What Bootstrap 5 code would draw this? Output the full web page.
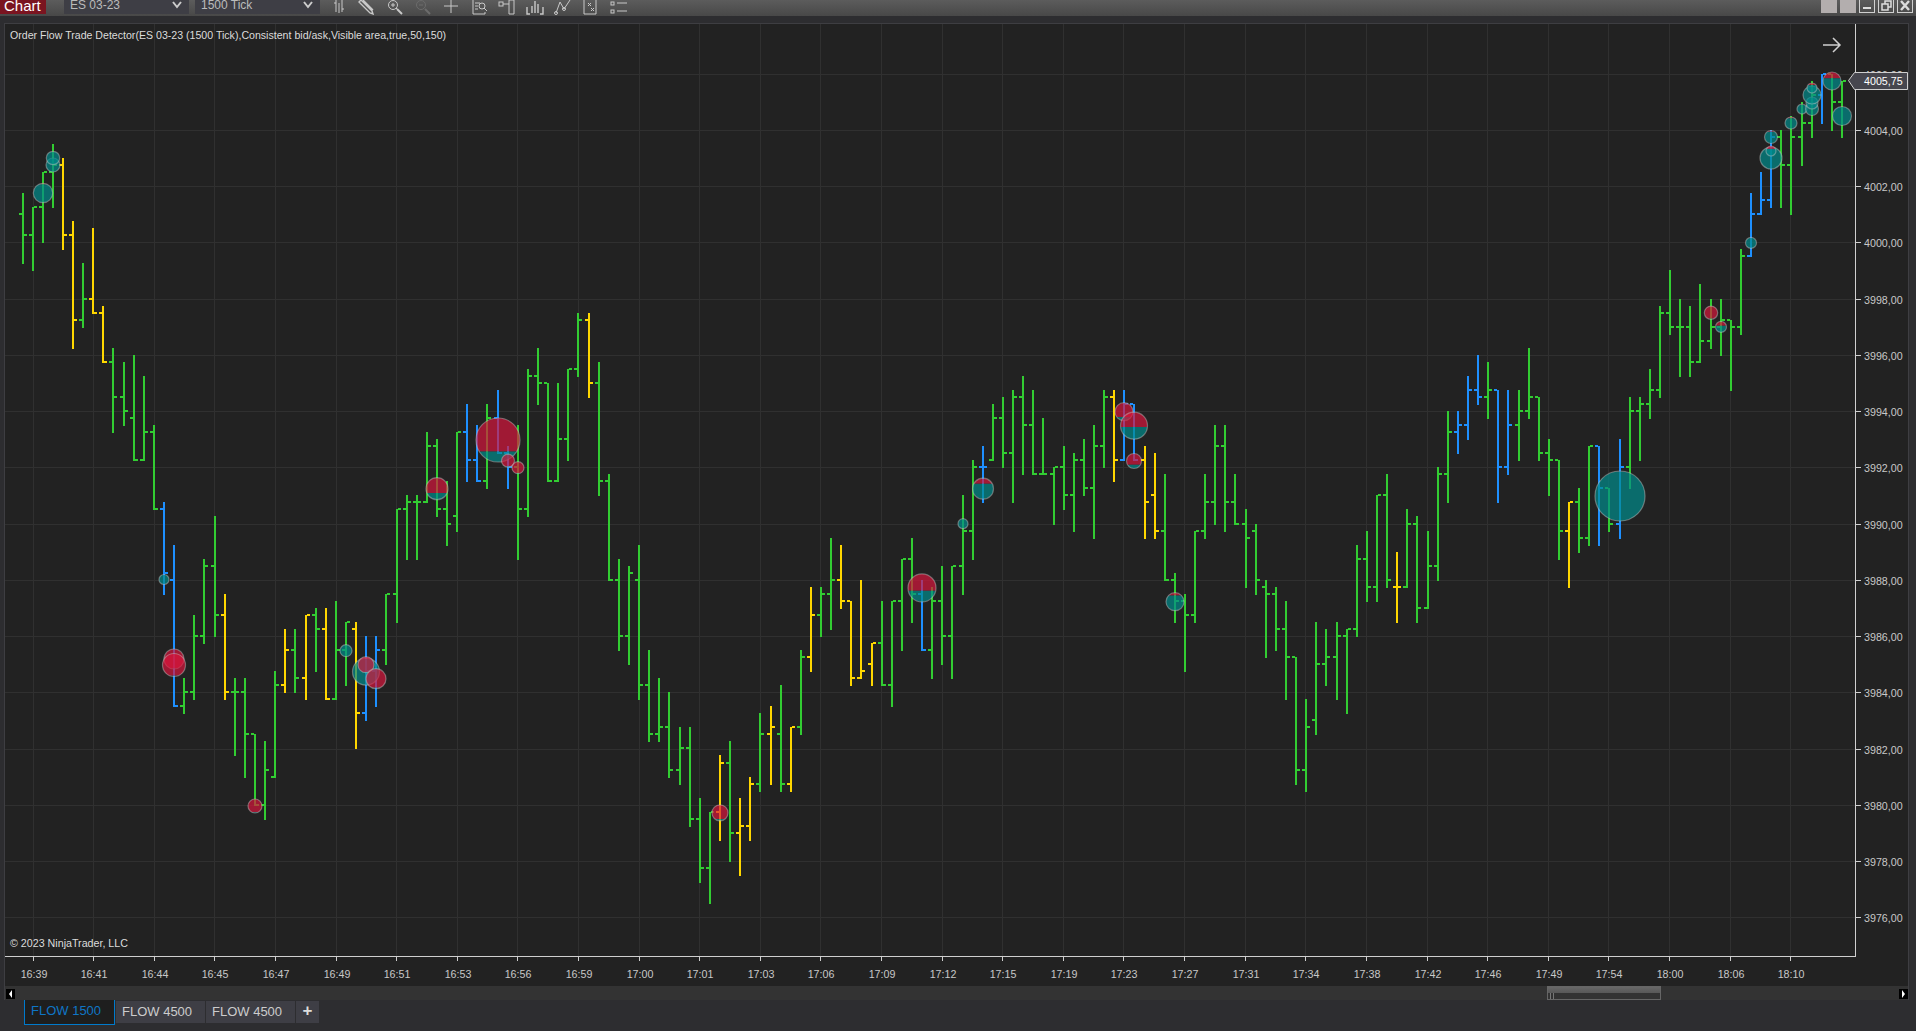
<!DOCTYPE html>
<html lang="en">
<head>
<meta charset="utf-8">
<title>Chart</title>
<link href="https://cdn.jsdelivr.net/npm/bootstrap@5.3.0/dist/css/bootstrap.min.css" rel="stylesheet">
<style>
html,body{height:100%;overflow:hidden}
body{background:#2d2d30;font-family:"Liberation Sans",Arial,sans-serif;color:#ccc}
.tool-strip{height:16px;background:linear-gradient(#5c5c5c,#484848);overflow:hidden}
.chart-tag{width:46px;height:14px;background:#7a1420;color:#fff;font-size:15px;line-height:11px;padding-left:4px;overflow:hidden}
.combo-box{height:14px;background:#3e3e45;color:#bbb;font-size:12px;line-height:10px;padding-left:6px;overflow:hidden}
.combo-a{width:125px;margin-left:18px}
.combo-b{width:125px;margin-left:6px}
.combo-box svg{margin-right:7px;flex:none}
.tool-icons{margin-left:10px;gap:10px}
.tool-icons svg{display:block;width:18px;height:15px;fill:none;stroke:#c8c8c8;stroke-width:1}
.tool-icons svg.dim{stroke:#6c6c6c}
.win-btns{margin-left:auto;gap:3px;padding-right:3px}
.win-btns span{display:block;width:16px;height:13px;border:1px solid #d0d0d0;border-top:0}
.win-btns span.pale{background:#b3aeae;border-color:#b3aeae}
.win-btns svg{display:block;width:14px;height:12px;stroke:#ddd;fill:none}
.chart-frame{margin:7px 7px 0 4px;border:1px solid #3e3e42;height:977px;background:#222}
.chart-frame>svg{display:block;width:1903px;height:962px}
.scroll-row{height:14px;background:#333}
.scroll-end{width:9px;height:10px;background:#000;margin-top:3px;margin-left:1px}
.scroll-end.far{margin-left:238px}
.scroll-thumb{width:114px;height:14px;margin-left:1532px;border:1px solid #666;background:linear-gradient(#686868 0,#585858 50%,#333 50%,#333 100%);padding:6px 0 0 2px}
.scroll-thumb svg{display:block}
.tab-strip{padding-left:24px;gap:1px;height:25px}
.flow-tab{width:89px;height:22px;margin-top:1px;background:#3e3e45;color:#ccc;font-size:13px;line-height:21px;padding-left:6px}
.flow-tab.on{width:91px;height:25px;margin-top:0;background:#1e1e1e;color:#0f76c6;border:1px solid #007acc;border-top:0;line-height:22px;padding-left:6px}
.flow-add{width:23px;height:22px;margin-top:1px;background:#3e3e45;color:#ddd;font-size:17px;font-weight:700;line-height:20px;text-align:center}
.t-ax{font-size:10.7px;fill:#c8c8c8;font-family:"Liberation Sans",Arial,sans-serif}
.t-note{font-size:10.7px;fill:#dcdcdc;font-family:"Liberation Sans",Arial,sans-serif}
.t-legend{font-size:10.6px;fill:#dcdcdc;font-family:"Liberation Sans",Arial,sans-serif}
.t-last{fill:#fff}
</style>
</head>
<body>
<div class="tool-strip d-flex">
  <div class="chart-tag">Chart</div>
  <div class="combo-box combo-a d-flex justify-content-between"><span>ES 03-23</span><svg width="10" height="10" viewBox="0 0 10 10"><path d="M1 2l4 5 4-5" fill="none" stroke="#ccc" stroke-width="2"/></svg></div>
  <div class="combo-box combo-b d-flex justify-content-between"><span>1500 Tick</span><svg width="10" height="10" viewBox="0 0 10 10"><path d="M1 2l4 5 4-5" fill="none" stroke="#ccc" stroke-width="2"/></svg></div>
  <div class="tool-icons d-flex">
    <svg viewBox="0 0 18 15"><path d="M6 0v12M6 3H4M12 0v12M12 9h2M9 3v10"/></svg>
    <svg viewBox="0 0 18 15"><path d="M3 0l11 11 1 3-3-1L1 2zM5 0l10 10" stroke-width="1.4"/></svg>
    <svg viewBox="0 0 18 15"><circle cx="7" cy="5" r="4.5"/><path d="M5 5h4M7 3v4M10 8l6 6" /><path d="M11 9l5 5" stroke-width="2"/></svg>
    <svg class="dim" viewBox="0 0 18 15"><circle cx="7" cy="5" r="4.5"/><path d="M5 5h4"/><path d="M11 9l5 5" stroke-width="2"/></svg>
    <svg viewBox="0 0 18 15"><path d="M9 0v13M2 6h14"/></svg>
    <svg viewBox="0 0 18 15"><path d="M3 0v14h12M15 14v-2M5 3h5M5 6h3M5 9h3"/><circle cx="12" cy="6" r="3"/><path d="M14 8l3 3"/></svg>
    <svg viewBox="0 0 18 15"><rect x="1" y="2" width="4" height="4"/><path d="M5 4h6M11 0h5v14h-5z"/></svg>
    <svg viewBox="0 0 18 15"><path d="M1 7v7h3M17 7v7h-3M6 6v7M9 1v12M12 4v9" stroke-width="1.4"/></svg>
    <svg viewBox="0 0 18 15"><path d="M2 13L6 2l4 7 6-9"/><circle cx="2" cy="13" r="1.5"/><circle cx="10" cy="9" r="1.5"/></svg>
    <svg viewBox="0 0 18 15"><path d="M2 0v14h12V0M6 3l3 3M9 3L6 6M9 8l3 3M12 8l-3 3"/></svg>
    <svg viewBox="0 0 18 15"><rect x="1" y="2" width="3" height="3"/><rect x="1" y="10" width="3" height="3"/><path d="M7 3h10M7 11h10"/></svg>
  </div>
  <div class="win-btns d-flex">
    <span class="pale"></span><span class="pale"></span>
    <span><svg viewBox="0 0 14 12"><path d="M3 8h8" stroke-width="2"/></svg></span>
    <span><svg viewBox="0 0 14 12"><path d="M3 4h6v6H3zM6 4V1h6v6H9" stroke-width="1.5"/></svg></span>
    <span><svg viewBox="0 0 14 12"><path d="M3 1l8 9M11 1l-8 9" stroke-width="2.4"/></svg></span>
  </div>
</div>

<div class="chart-frame">
  <svg id="plot" viewBox="5 24 1903 962" xmlns="http://www.w3.org/2000/svg"></svg>
  <div class="scroll-row d-flex">
    <div class="scroll-end d-flex align-items-center justify-content-center"><svg width="5" height="8" viewBox="0 0 5 8"><path d="M4 0v8L1 4z" fill="#fff"/></svg></div>
    <div class="scroll-thumb"><svg width="6" height="6" viewBox="0 0 6 6"><path d="M.5 0v6M3.5 0v6" stroke="#777" fill="none"/></svg></div>
    <div class="scroll-end far d-flex align-items-center justify-content-center"><svg width="5" height="8" viewBox="0 0 5 8"><path d="M1 0v8l3-4z" fill="#fff"/></svg></div>
  </div>
</div>

<div class="tab-strip d-flex">
  <div class="flow-tab on">FLOW 1500</div>
  <div class="flow-tab">FLOW 4500</div>
  <div class="flow-tab">FLOW 4500</div>
  <div class="flow-add">+</div>
</div>

<script>
const G='#32cd32',Y='#ffd700',B='#1e90ff';
const segs=[
{x0:0,y0:130,sy:2.24,b:[[69,G,139,301,190,237],[99,G,173,317,237,173],[129,G,93,254,174,93],[159,G,29,176,93,77],[189,Y,60,270,77,237],[219,Y,205,490,237,425],[249,G,298,443,425,378],[279,Y,220,410,378,410],[309,Y,392,520,410,520],[339,G,487,680,520,600],[372,G,517,664,600,631],[402,G,502,742,647,742],[432,G,549,742,742,678],[462,G,661,851,678,851],[492,B,833,1043,851,992],[522,B,927,1292,1007,1292],[552,G,1228,1308,1292,1261],[582,G,1086,1278,1261,1135],[612,G,959,1153,1135,975],[645,G,865,1137,975,1087],[675,Y,1039,1278,1087,1261],[705,G,1228,1403,1261,1261],[735,G,1228,1453,1261,1355],[765,G,1355,1515,1355,1515],[795,G,1369,1547,1514,1433],[825,G,1212,1452,1452,1245],[855,Y,1118,1262,1245,1167],[885,G,1118,1262,1167,1229],[918,Y,1087,1278,1229,1087],[948,G,1071,1215,1087,1119]]},
{x0:310,y0:300,sy:3,b:[[48,Y,925,1200,990,1200],[78,G,904,1200,1200,1053],[108,G,967,1160,1053,968],[138,Y,967,1347,990,1242],[168,B,1008,1265,1242,1105],[198,B,1008,1223,1105,1053],[228,G,884,1097,1053,884],[261,G,629,970,884,629],[291,G,586,779,629,608],[321,G,586,779,608,608],[351,G,397,608,608,440],[381,G,418,653,440,630],[411,G,545,737,630,672],[441,G,398,695,651,398],[471,B,313,548,398,482],[501,B,376,547,482,546],[531,G,313,569,546,356],[564,B,267,461,356,461],[594,B,439,569,461,503],[624,G,376,779,503,630],[654,G,205,653,630,228],[684,G,142,317,228,248],[714,G,248,546,248,546],[744,G,247,547,546,420],[774,G,206,484,420,206],[804,G,37,230,206,60],[837,Y,37,296,60,248],[867,G,184,590,248,546],[897,G,523,840,546,840],[927,G,775,1055,840,1011]]},
{x0:620,y0:330,sy:2.703,b:[[27,G,635,907,830,656],[57,G,579,1002,675,962],[87,G,865,1116,962,1095],[117,G,941,1116,1095,1076],[147,G,979,1213,1076,1189],[180,G,1073,1232,1189,1132],[210,G,1073,1345,1132,1324],[240,G,1265,1497,1324,1457],[270,G,1304,1553,1457,1304],[300,Y,1149,1383,1304,1170],[330,G,1111,1440,1170,1362],[360,Y,1265,1478,1362,1343],[390,Y,1208,1383,1343,1229],[420,G,1035,1251,1229,1094],[453,Y,1016,1232,1094,1075],[483,G,960,1251,1094,1229],[513,Y,1075,1251,1229,1075],[543,G,865,1097,1075,886],[573,Y,695,926,886,772],[603,G,695,832,772,716],[633,G,560,813,716,676],[663,Y,579,756,676,735],[693,Y,735,964,735,943],[723,Y,673,945,943,924],[756,Y,848,964,905,848],[786,G,733,964,848,962],[816,G,735,1021,962,735],[846,G,618,870,735,618],[876,G,560,794,618,716],[906,B,673,868,716,868],[936,G,695,945,868,735]]},
{x0:930,y0:360,sy:3,b:[[36,G,615,917,725,830],[66,G,617,959,830,617],[99,G,405,707,617,512],[129,G,300,599,512,323],[159,B,258,431,323,323],[189,G,132,305,302,176],[219,G,111,326,176,282],[249,G,87,431,282,113],[279,G,45,347,113,197],[309,G,87,345,197,345],[339,G,174,345,345,345],[372,G,323,494,345,323],[402,G,258,452,323,407],[432,G,279,515,407,302],[462,G,237,410,302,386],[492,G,195,536,386,260],[522,G,87,326,260,113],[552,Y,87,368,113,302],[582,B,87,302,302,134],[612,B,134,300,134,302],[645,Y,258,536,302,428],[675,Y,279,536,407,512],[705,G,342,660,512,660],[735,G,636,791,660,725],[765,G,702,938,725,767],[795,G,512,791,767,512],[825,G,342,536,512,428],[855,G,195,494,428,260],[885,G,195,515,260,428],[915,G,342,492,428,491],[948,G,447,686,491,533]]},
{x0:1240,y0:340,sy:3,b:[[48,G,549,767,572,719],[78,G,717,956,743,764],[108,G,741,935,764,869],[138,G,783,1082,869,953],[168,G,953,1337,953,1289],[198,G,1077,1358,1289,1163],[228,G,846,1187,1142,974],[258,G,867,1040,974,953],[291,G,846,1082,953,890],[321,G,869,1124,890,869],[351,G,612,893,869,656],[381,G,570,788,656,743],[411,G,467,788,743,467],[441,G,402,746,467,719],[471,Y,633,851,743,743],[501,G,507,746,743,551],[531,G,528,851,551,806],[564,G,570,806,806,677],[594,G,381,722,677,404],[624,G,213,491,404,278],[654,B,213,344,278,257],[684,B,105,302,257,149],[714,B,42,197,149,173],[744,G,63,239,173,149],[774,B,149,491,149,383],[804,B,147,407,383,257],[837,G,147,365,257,215],[867,G,21,239,215,173],[897,G,173,365,173,341],[927,G,297,470,341,362]]},
{x0:1540,y0:70,sy:2.904,b:[[57,G,1134,1422,1134,1338],[87,Y,1255,1505,1338,1255],[117,G,1214,1401,1256,1358],[147,G,1094,1381,1358,1094],[177,B,1094,1381,1094,1217],[207,G,1217,1340,1217,1317],[240,B,1071,1361,1317,1155],[270,G,950,1218,1155,992],[300,G,950,1137,992,972],[330,G,866,1015,972,928],[360,G,683,954,928,705],[390,G,581,768,705,745],[420,G,662,889,745,745],[450,G,683,889,745,848],[480,G,621,848,848,787],[513,G,662,809,787,745],[543,G,662,829,745,725],[573,G,725,930,725,745],[603,G,520,768,745,542],[633,B,354,544,542,420],[663,B,293,420,420,377],[693,B,172,403,377,193],[723,G,172,403,193,275],[753,G,132,423,275,193],[786,G,91,278,193,153],[816,G,30,196,153,70],[846,B,10,156,70,10],[876,G,10,176,10,92],[906,G,30,196,92,30]]}
];
/* bubbles: cx, cy, r, share of red from the top */
const bubbles=[[43,193,9.7,.05],[53,165,7,.02],[53,158,6.7,.02],[164,579.5,5,.02],[174,659,10,.97],[174,665,11.5,.97],[255,806,7,.95],[346,650.7,6,.02],[366,671.7,13.5,.02],[366,664.7,8,.95],[376,678.7,10,.95],[437,488.7,11,.7],[498,440,22,.76],[508,460.7,6.5,.95],[518,467.7,6,.95],[720,812.8,8,.88],[922,587.9,14,.6],[963,523.7,5,.02],[983,488.7,10.5,.27],[1124,411.7,9,.8],[1134,425.7,13.5,.55],[1134,461,7.5,.75],[1175,601.7,9,.15],[1620,496,25,.005],[1711,312.8,6.7,.95],[1721,326.9,5.5,.4],[1751,242.9,5.5,.02],[1771,158,11,.02],[1771,151,5,.3],[1771,137,6.5,.1],[1791,123,6,.1],[1802,109,5,.05],[1812,109,6.5,.02],[1812,103,6,.02],[1812,95,9,.02],[1812,88,5,.2],[1832,81,9,.35],[1842,116,9.5,.02]];
const times=['16:39','16:41','16:44','16:45','16:47','16:49','16:51','16:53','16:56','16:59','17:00','17:01','17:03','17:06','17:09','17:12','17:15','17:19','17:23','17:27','17:31','17:34','17:38','17:42','17:46','17:49','17:54','18:00','18:06','18:10'];
const Y0=242.3,TICK=7.03;
const py=p=>Y0+(4000-p)*28.125;
let s='';
const rect=(x,y,w,h,f)=>`<rect x="${x}" y="${y}" width="${w}" height="${h}" fill="${f}" shape-rendering="crispEdges"/>`;
const GRID='#303030',AX='#cfcfcf';
for(let p=3976;p<=4006;p+=2){s+=rect(5,Math.round(py(p)),1851,1,GRID);}
const xt=times.map((t,i)=>Math.round(32.5+60.61*i));
xt.forEach(x=>{s+=rect(x,24,1,932,GRID);});
const snap=y=>Math.round(Y0+Math.round((y-Y0)/TICK)*TICK);
segs.forEach(g=>g.b.forEach(b=>{
  const x=Math.round(g.x0+b[0]/3),c=b[1];
  const f=v=>snap(g.y0+v/g.sy);
  const hi=f(b[2]),lo=f(b[3]),o=f(b[4]),cl=f(b[5]);
  s+=rect(x-1,hi,2,lo-hi+1,c);
  s+=rect(x-4,o-1,3,2,c);
  s+=rect(x+1,cl-1,3,2,c);
}));
let defs='';
bubbles.forEach((b,i)=>{
  const [cx,cy,r,fr]=b;const top=cy-r,cut=top+2*r*fr;
  defs+=`<clipPath id="r${i}"><rect x="${cx-r}" y="${top}" width="${2*r}" height="${2*r*fr}"/></clipPath><clipPath id="t${i}"><rect x="${cx-r}" y="${cut}" width="${2*r}" height="${2*r*(1-fr)}"/></clipPath>`;
  s+=`<circle cx="${cx}" cy="${cy}" r="${r}" fill="#dc143c" fill-opacity=".68" clip-path="url(#r${i})"/><circle cx="${cx}" cy="${cy}" r="${r}" fill="#008b8b" fill-opacity=".7" clip-path="url(#t${i})"/><circle cx="${cx}" cy="${cy}" r="${r}" fill="none" stroke="#c8c8c8" stroke-opacity=".45" stroke-width="1.2"/>`;
});
s+=rect(1855,24,1,933,AX)+rect(5,956,1851,1,AX);
xt.forEach((x,i)=>{s+=rect(x,957,1,4,AX);s+=`<text class="t-ax" x="${x+1}" y="978" text-anchor="middle">${times[i]}</text>`;});
for(let p=3976;p<=4006;p+=2){const y=Math.round(py(p));s+=rect(1856,y,5,1,AX);
  s+=`<text class="t-ax" x="1864" y="${y+5}">${p},00</text>`;}
s+=`<path d="M1848.5 80.5l6-8h53v17h-53z" fill="#46464e" stroke="#cfcfcf"/><text class="t-ax t-last" x="1864" y="85">4005,75</text>`;
s+=`<path d="M1823 45h16M1833 38l7 7-7 7" fill="none" stroke="#d0d0d0" stroke-width="1.5"/>`;
s+=`<text class="t-legend" x="10" y="39">Order Flow Trade Detector(ES 03-23 (1500 Tick),Consistent bid/ask,Visible area,true,50,150)</text>`;
s+=`<text class="t-note" x="10" y="947">© 2023 NinjaTrader, LLC</text>`;
document.getElementById('plot').innerHTML='<defs>'+defs+'</defs>'+s;
</script>
<script src="https://cdn.jsdelivr.net/npm/bootstrap@5.3.0/dist/js/bootstrap.bundle.min.js"></script>
</body>
</html>
